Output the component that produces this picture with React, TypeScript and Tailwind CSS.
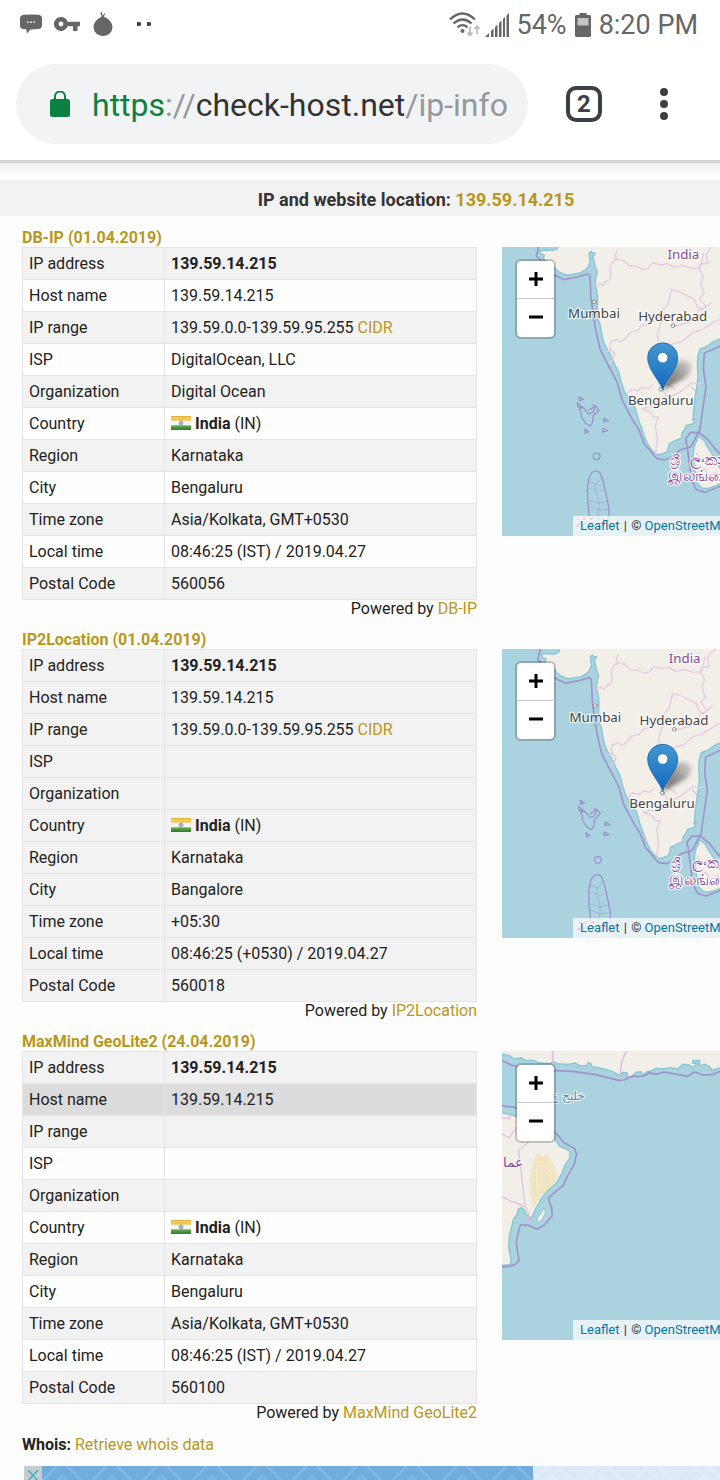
import type { ReactNode } from "react";

type Row = { label: string; value: ReactNode };

function Flag({ id }: { id: string }) {
  return (
    <svg viewBox="0 0 60 42" className="mr-1 mb-0.5 inline-block h-[14px] w-5 align-middle" aria-hidden="true">
      <defs>
        <linearGradient id={`${id}-top`} x1="0" y1="0" x2="0" y2="1">
          <stop offset="0" stopColor="#d3a52c" />
          <stop offset="0.3" stopColor="#f6cd52" />
          <stop offset="1" stopColor="#f0c04c" />
        </linearGradient>
        <linearGradient id={`${id}-low`} x1="0" y1="0" x2="0" y2="1">
          <stop offset="0" stopColor="#6cae4b" />
          <stop offset="1" stopColor="#2c7a34" />
        </linearGradient>
      </defs>
      <rect width="60" height="42" fill="#f7f7f3" />
      <rect width="60" height="14" fill={`url(#${id}-top)`} />
      <rect y="28" width="60" height="14" fill={`url(#${id}-low)`} />
      <circle cx="30" cy="21" r="6" fill="#b9c6dd" stroke="#7f95c0" strokeWidth="2.5" />
      <circle cx="30" cy="21" r="1.6" fill="#5e78ae" />
    </svg>
  );
}

const link = "text-[#b8971b]";
const halo = { paintOrder: "stroke" as const };

function country(id: string) {
  return (
    <>
      <Flag id={id} />
      <b>India</b> (IN)
    </>
  );
}

const range = (
  <>
    139.59.0.0-139.59.95.255 <a href="#cidr" className={link}>CIDR</a>
  </>
);

const ip = <b>139.59.14.215</b>;

const dbIp: Row[] = [
  { label: "IP address", value: ip },
  { label: "Host name", value: "139.59.14.215" },
  { label: "IP range", value: range },
  { label: "ISP", value: "DigitalOcean, LLC" },
  { label: "Organization", value: "Digital Ocean" },
  { label: "Country", value: country("f1") },
  { label: "Region", value: "Karnataka" },
  { label: "City", value: "Bengaluru" },
  { label: "Time zone", value: "Asia/Kolkata, GMT+0530" },
  { label: "Local time", value: "08:46:25 (IST) / 2019.04.27" },
  { label: "Postal Code", value: "560056" },
];

const ip2Location: Row[] = [
  { label: "IP address", value: ip },
  { label: "Host name", value: "139.59.14.215" },
  { label: "IP range", value: range },
  { label: "ISP", value: "" },
  { label: "Organization", value: "" },
  { label: "Country", value: country("f2") },
  { label: "Region", value: "Karnataka" },
  { label: "City", value: "Bangalore" },
  { label: "Time zone", value: "+05:30" },
  { label: "Local time", value: "08:46:25 (+0530) / 2019.04.27" },
  { label: "Postal Code", value: "560018" },
];

const maxMind: Row[] = [
  { label: "IP address", value: ip },
  { label: "Host name", value: "139.59.14.215" },
  { label: "IP range", value: "" },
  { label: "ISP", value: "" },
  { label: "Organization", value: "" },
  { label: "Country", value: country("f3") },
  { label: "Region", value: "Karnataka" },
  { label: "City", value: "Bengaluru" },
  { label: "Time zone", value: "Asia/Kolkata, GMT+0530" },
  { label: "Local time", value: "08:46:25 (IST) / 2019.04.27" },
  { label: "Postal Code", value: "560100" },
];

function IndiaMap({ id, dx, dy, pinY }: { id: string; dx: number; dy: number; pinY: number }) {
  return (
    <svg viewBox="21 21 654 867" preserveAspectRatio="xMinYMin slice" className="block h-full w-full" role="img" aria-label="Map of southern India">
      <defs>
        <linearGradient id={`${id}-pin`} x1="0" y1="0" x2="0" y2="1">
          <stop offset="0" stopColor="#4298d2" />
          <stop offset="1" stopColor="#1468bd" />
        </linearGradient>
        <linearGradient id={`${id}-shade`} x1="0" y1="1" x2="1" y2="0">
          <stop offset="0" stopColor="#000" stopOpacity="0.65" />
          <stop offset="1" stopColor="#000" stopOpacity="0.1" />
        </linearGradient>
        <filter id={`${id}-blur`} x="-30%" y="-30%" width="160%" height="160%">
          <feGaussianBlur stdDeviation="7" />
        </filter>
      </defs>
      <rect x="0" y="0" width="2000" height="1000" fill="#aad3df" />
      <g transform={`translate(${dx} ${dy})`} strokeLinejoin="round" strokeLinecap="round">
        <path
          d="M190 5l-2 20-15 7-20-2-18 2 2 8 12 6-4 9 6 8 18 6 12 18 15 11 19 7 18-2 22-4 15-9 10-10 6-16-3-12 0-14 6-4 4 6 8-1-7 10 3 14 4 18 6 15-4 14-3 23 6 20 2 24-1 25 0 32 8 18 4 22 6 31 9 18 17 32 8 18 12 22 7 28 10 32 17 25 16 26 10 34 8 22 10 30 12 25 10 14 18 14 14-4 14-6 6-24 20-10 16-7 2-15 10-14 2-8 22-6 0-32 3-30 6-40 5-38-2-40 2-24 6-20 14-5 10-5 18-14 16-6 1600-40V0z"
          fill="#f2efe9"
          stroke="#86c6d4"
          strokeWidth="4"
        />
        <path d="M601 588l14 4 11 8 12 22 12 18 12 22 20 34v32l-20 10-22 7-18 0-14-14-7-30-3-30-4-30 6-30 8-12z" fill="#f2efe9" stroke="#86c6d4" strokeWidth="4" />

        <g fill="none" stroke="#e5cbe1" strokeWidth="4">
          <path d="M300 134l14-3 10 6 7-12 13-5 4-16-3-20 8-20 12-4-4-14 4-14M357 56l30 6 16 16 22 2 18 8 16-3 14-16 24 6 20-4 22 12 24-6 28 9 24-2 4-12 20-2-6-26 10-16 18-14" />
          <path d="M340 367l14-8 5-22-14-6-10 4M352 338l-8-18 4-16 18-6 10 8 18-12 10-16 24-6 14-16 22-4 20-16 22-12M491 304l-4-20 10-34 2-36 20-20 4-22 6-22 20 4 26 12 24 14 8 20 14 10 12-10-20-24 14-16-10-30 8-22-14-24 10-20 4-24M608 212l24-10 16-14" />
          <path d="M498 304l28 10 36-10 30-26 26-8 22-12 22-16 20-6M540 258l40-10 26-18" />
          <path d="M395 462l14-14 20 4 12-10 20 4 12-10M503 450l10 16 10 6 12-6 20-10 20-16 14-12 18 4 16-2M503 428l22 8 16 14M445 508l22 8 8 14 16 2-10 26 6 40-4 30-1 22M440 508l22-10 16 6 22-10 14-12" />
          <path d="M604 640l14 20 20-10 10 20 16-12 10 14M604 700l24-14 14 20 24-10" />
        </g>

        <g fill="none" stroke="#9f93cc" strokeWidth="5">
          <path d="M134 10l-10 38 19 18 14 26 18 11 32 16 40-8 32-9 6 6 3 64 7 56 8 46 13 56 29 56 22 42 15 54 32 60 18 28 16 42 38 44 24 4 24-10 20-20 34-10 18-34 8-14 10-70 9-62-8-54 3-46 14-6 34-16 60-8" />
          <path d="M577 622l-5-26 15-19 26 1 25 20 22 28 26 28M577 622l5 40 8 60 14 27 26 8 46-18" />
        </g>
        <path d="M577 622l-8-20M588 440l20 18M590 538l14 0" stroke="#b7a9d8" strokeWidth="3" />

        <g fill="none" stroke="#9c8cca" strokeWidth="3.5">
          <path d="M252 470l13 8-12 4zM247 488l13 11-12 2zM282 511l20-14 10 13-18 18-1 18-7 12-14-8-12-18-3-18-4-10 12-1 6 7 10 12 14-6 5-12-6-10M327 534l14 9-15 3zM324 565l14 8-15 3zM269 567l12 9-10 4z" />
          <path d="M297 640l14-1 5 10-6 9-12 0-4-9z" />
          <path d="M284 840l-6-60-1-38 5-28 8-16 12-6 12 5 8 17 10 42 9 44 3 60" />
          <path d="M282 725l22 8 18-20M280 745l22 6M302 733l0 24 10 30-4 50M308 755l22-6M281 780l28 10 28-6M284 800l24 10 30-2" strokeWidth="2" opacity="0.65" />
        </g>

        <g fill="#fff" stroke="#777" strokeWidth="2.5">
          <circle cx="297" cy="186" r="5.5" />
          <circle cx="534" cy="257" r="5.5" />
          <circle cx="498" cy="448" r="5.5" />
        </g>
        <g fontFamily="'Noto Sans', 'Open Sans', sans-serif" fontSize="40" stroke="#fff" strokeOpacity="0.75" strokeWidth="7" fill="#444" textAnchor="middle" style={halo}>
          <text x="297" y="234" style={halo}>Mumbai</text>
          <text x="533" y="243" style={halo}>Hyderabad</text>
          <text x="497" y="494" style={halo}>Bengaluru</text>
          <text x="565" y="57" fill="#8a4a98" style={halo}>India</text>
          <g textAnchor="start" fill="#8a4a98" strokeOpacity="0.9">
            <text x="524" y="674" fontSize="41" style={halo}>ශ්‍රී</text>
            <text x="586" y="674" fontSize="46" style={halo}>ලංකා</text>
            <text x="518" y="724" fontSize="44" style={halo}>இலங்கை</text>
            <text x="240" y="862" style={halo}>ދިވެހިރާއްޖެ</text>
          </g>
        </g>
      </g>
      <g transform={`translate(0 ${pinY})`}>
        <path d="M503 450L535 372Q560 352 585 368Q598 390 570 415Z" fill={`url(#${id}-shade)`} filter={`url(#${id}-blur)`} />
        <path d="M503 450C497 424 458 390 458 353a45 44 0 0 1 90 0c0 37-39 71-45 97z" fill={`url(#${id}-pin)`} stroke="#2a70ad" strokeWidth="3" />
        <circle cx="503" cy="353" r="16" fill="#fff" stroke="#2a6da6" strokeWidth="2.5" />
      </g>
    </svg>
  );
}

function OmanMap() {
  return (
    <svg viewBox="21 18 654 870" preserveAspectRatio="xMinYMin slice" className="block h-full w-full" role="img" aria-label="Map of the Arabian Sea">
      <defs>
        <pattern id="sand" width="14" height="14" patternUnits="userSpaceOnUse">
          <rect width="14" height="14" fill="#f3e9ca" />
          <path d="M2 3h3M9 9h3M10 3h2M3 10h2M7 6h1" stroke="#e3d09a" strokeWidth="2.5" />
        </pattern>
      </defs>
      <rect x="0" y="0" width="2000" height="1000" fill="#aad3df" />
      <g strokeLinejoin="round" strokeLinecap="round">
        <path d="M10 24l34 8 14 10 20-4 12 8 26 0 18 8 32 2 8-8 12 8 30 2 26-4 12 8 22 0 2-8 10 2 2 8 30 6 14 4 20 6 14 8 10 4 3-10 16 2 0 14 12-2 14-14 14-2 6 10 14-10 12-2 14-8 24 2 16-4 26 4 14-14 20 2 10 8 14-12-14-2 0-8 22 0-2 8 0 8 16-4 14 6 8 12 18-6 26-2 1600 20V0H10z" fill="#f2efe9" stroke="#86c6d4" strokeWidth="4" />
        <path d="M10 203l22 2 20 6 25 6 40 30 60 32 18 26 16 6 14 8 0 20-14 20-12 30-16 26-20 16-22 26-8 16-10 16-12 26-6 4-10-10-8-14-8-8-10 6-2 14-12 16-6 26-6 22-2 34 4 24 4 16-4 14-28 2H10z" fill="#f2efe9" stroke="#86c6d4" strokeWidth="4" />
        <path d="M147 489l5 14-6 10-6 14-12 5-2-12 12-16z" fill="#f2efe9" stroke="#86c6d4" strokeWidth="3" />
        <path d="M128 323l12 10 14-4 18 22 14 30-4 30-20 20-26 20-12 28-14 4-4-40-2-36 4-36 10-28z" fill="url(#sand)" />
        <g fill="none" stroke="#dfbfe0" strokeWidth="3.5">
          <path d="M172 10l2 45M396 15l-16 34-7 56" strokeWidth="5" />
          <path d="M44 212v8H10M10 260l32 18 30-38M100 292l-30 24 6 40 6 60 8 64M10 450l38 18 42 16 12 24-4 30" />
        </g>
        <g fill="none" stroke="#9f93cc" strokeWidth="5">
          <path d="M10 42l40 18 60 20 68-4 60 4 60 8 52 13 20 5 18-1 20-11 36 0 20-11 18 5 26-7 70 13 20-13 28 9 26-1 26-11 60-4" />
          <path d="M10 178l20 6 26 2 60 30 68 50 24 28 30 16 7 18-9 34-18 30-14 30-30 24-14 14 10 30 2 22-24 28-22 13-28-13-22 0-8 30-4 26 8 50-8 10-20 8-32 2" />
        </g>
        <g fontFamily="'DejaVu Sans', 'Noto Sans', sans-serif" stroke="#fff" strokeOpacity="0.8" strokeWidth="6">
          <text x="168" y="166" fontSize="36" fill="#5b88bb" direction="ltr" style={halo}>خليج ع</text>
          <text x="24" y="367" fontSize="41" fill="#8a4a98" direction="ltr" style={halo}>عما</text>
        </g>
      </g>
    </svg>
  );
}

type ProviderProps = {
  name: string;
  date: string;
  rows: Row[];
  map: ReactNode;
  tone: "striped" | "plain";
  active?: number;
};

function Provider({ name, date, rows, map, tone, active }: ProviderProps) {
  return (
    <section className="mb-[11px] flex pl-[22px]">
      <div className="w-[455px] shrink-0">
        <h2 className={`h-5 text-base leading-[22px] font-bold ${link}`}>
          {name} ({date})
        </h2>
        <table className="w-full table-fixed border-collapse border border-[#e5e5e5]">
          <tbody>
            {rows.map((row, i) => (
              <tr
                key={row.label}
                className={`h-8 ${i === active ? "bg-[#dcdcdc]" : tone === "striped" && i % 2 === 1 ? "bg-[#fefefe]" : "bg-[#f2f2f2]"}`}
              >
                <th scope="row" className="w-[142px] border border-[#e5e5e5] px-1.5 py-0 text-left leading-5 font-normal">
                  {row.label}
                </th>
                <td className="border border-[#e5e5e5] px-1.5 py-0 leading-5">{row.value}</td>
              </tr>
            ))}
          </tbody>
        </table>
        <p className="text-right leading-[18px]">
          Powered by <a href="#provider" className={link}>{name}</a>
        </p>
      </div>
      <div className="relative mt-5 ml-[25px] h-[289px] min-w-0 flex-1 overflow-hidden">
        {map}
        <div className="absolute top-3 left-[13px] flex w-[41px] flex-col rounded-md border-2 border-black/20 bg-white bg-clip-padding">
          <button type="button" aria-label="Zoom in" className="flex h-[38px] items-center justify-center border-b border-[#cccccc] pb-0.5">
            <svg viewBox="0 0 14 14" className="h-3.5 w-3.5"><path d="M7 0v14M0 7h14" stroke="#000" strokeWidth="3" /></svg>
          </button>
          <button type="button" aria-label="Zoom out" className="flex h-[38px] items-center justify-center pb-0.5">
            <svg viewBox="0 0 14 14" className="h-3.5 w-3.5"><path d="M0 7h14" stroke="#000" strokeWidth="3" /></svg>
          </button>
        </div>
        <div className="absolute right-0 bottom-0 left-[71px] h-5 overflow-hidden bg-white/70 pl-[7px] text-[13px] leading-[19px] whitespace-nowrap text-[#333333]">
          <a href="#leaflet" className="text-[#0078a8]">Leaflet</a> <span className="mx-px">|</span> © <a href="#osm" className="text-[#0078a8]">OpenStreetMap</a>
        </div>
      </div>
    </section>
  );
}

function StatusBar() {
  return (
    <div className="flex h-12 items-center justify-between pr-[22px] pl-5 text-[#666666]">
      <div className="flex items-center">
        <svg viewBox="0 0 22 20" className="h-5 w-[22px]" aria-hidden="true">
          <path d="M3.500.8Q11 0 18.500.8 22 1.200 22 4.500v7q0 3-3.500 3.500l-8 .4-3.700 4.100-.3-4-3-.4Q0 14.700 0 11.500v-7Q0 1.200 3.500.8z" fill="currentColor" />
          <path d="M7 8.200h1.600M10.200 8.200h1.600M13.400 8.200h1.600" stroke="#fff" strokeWidth="1.400" />
        </svg>
        <svg viewBox="0 0 26 14" className="ml-3 h-3.5 w-[26px]" aria-hidden="true">
          <path fillRule="evenodd" d="M7 0a7 7 0 1 0 6.600 9.200H19V14h4.500V9.200H26V4.800H13.600A7 7 0 0 0 7 0zM7 4.600a2.400 2.400 0 1 1 0 4.800 2.400 2.400 0 0 1 0-4.800z" fill="currentColor" />
        </svg>
        <svg viewBox="0 0 20 26" className="ml-[13px] h-[26px] w-5" aria-hidden="true">
          <path d="M10 5c2 1.600 9.500 4 9.500 11.200A9 9 0 0 1 10 25 9 9 0 0 1 .5 16.200C.5 9 8 6.600 9 5z" fill="currentColor" />
          <path d="M9.500 6.500L8 1M9.500 6.500l2.300-4M9.200 4L7.800 3" stroke="currentColor" strokeWidth="1.200" fill="none" />
        </svg>
        <svg viewBox="0 0 16 4" className="ml-6 h-1 w-4 text-[#444444]" aria-hidden="true">
          <path d="M0 0h3l1 1v2L3 4H0zM10 0h3l1 1v2l-1 1h-3z" fill="currentColor" />
        </svg>
      </div>
      <div className="flex items-center pt-0.5 text-[27px] leading-8">
        <svg viewBox="0 0 32 26" className="h-[26px] w-8" aria-hidden="true">
          <g fill="none" stroke="currentColor" strokeWidth="2.200">
            <path d="M1 7.500Q13.500-4.500 26 7.500M4.500 11.500q9-8 18 0M8.500 15.300q5-4.200 10 0" />
          </g>
          <circle cx="13.500" cy="19" r="2" fill="currentColor" />
          <path d="M21 15v8M18.500 20.500L21 23.500l2.500-3M28 22v-8M25.300 17L28 14l2.700 3" fill="none" stroke="#bdbdbd" strokeWidth="1.800" />
        </svg>
        <svg viewBox="0 0 24 24" className="ml-1 h-6 w-6" aria-hidden="true">
          <path d="M0 24l4-4v4zM6 24v-6l2.500-2.500V24zM10 24V14l2.500-2.500V24zM14 24V10l2.500-2.500V24zM18 24V6l2-2v20zM21.500 24V2.500L24 0v24z" fill="currentColor" />
        </svg>
        <span className="ml-2">54%</span>
        <svg viewBox="0 0 16 24" className="ml-2 h-6 w-4" aria-hidden="true">
          <path d="M4.500 0h7v2H15l1 1v20l-1 1H1l-1-1V3l1-1h3.500z" fill="currentColor" />
          <path d="M2.500 5h11v7.500h-11z" fill="#c4c4c4" />
        </svg>
        <span className="ml-2">8:20 PM</span>
      </div>
    </div>
  );
}

function Toolbar() {
  return (
    <div className="flex h-28 items-center gap-4 px-4">
      <button type="button" className="flex h-20 min-w-0 flex-1 items-center rounded-full bg-[#f1f3f4] pr-5 pl-[34px] text-left">
        <svg viewBox="0 0 20 26" className="h-[26px] w-5 shrink-0 text-[#0b8043]" aria-hidden="true">
          <path d="M5 10V5.500a5 5 0 0 1 10 0V10" fill="none" stroke="currentColor" strokeWidth="2" />
          <rect y="8" width="20" height="18" rx="2.500" fill="currentColor" />
        </svg>
        <span className="ml-[22px] min-w-0 flex-1 overflow-hidden pt-0.5 text-[32px] leading-10 whitespace-nowrap text-[#333333]">
          <span className="text-[#0b8043]">https</span>
          <span className="text-[#969899]">://</span>check-host.net<span className="text-[#969899]">/ip-info</span>
        </span>
      </button>
      <div className="flex">
        <button type="button" aria-label="Open tabs" className="flex h-20 w-20 items-center justify-center">
          <span className="flex h-9 w-9 items-center justify-center rounded-[10px] border-4 border-[#3c4043] text-2xl leading-6 font-bold text-[#3c4043]">2</span>
        </button>
        <button type="button" aria-label="Menu" className="flex h-20 w-20 items-center justify-center text-[#3c4043]">
          <svg viewBox="0 0 8 32" className="h-8 w-2"><circle cx="4" cy="4" r="4" fill="currentColor" /><circle cx="4" cy="16" r="4" fill="currentColor" /><circle cx="4" cy="28" r="4" fill="currentColor" /></svg>
        </button>
      </div>
    </div>
  );
}

function Chevrons({ id, color }: { id: string; color: string }) {
  return (
    <svg className="block h-full w-full" aria-hidden="true">
      <defs>
        <pattern id={id} width="50" height="50" patternUnits="userSpaceOnUse">
          <path d="M-5 35L20 10l25 25M-5 20L20-5l25 25M-5 50l25-25 25 25M45 35l10-10M45 20l10-10" fill="none" stroke={color} strokeWidth="2" />
        </pattern>
      </defs>
      <rect width="100%" height="100%" fill={`url(#${id})`} />
    </svg>
  );
}

export default function App() {
  return (
    <div className="overflow-x-hidden bg-[#fdfdfd] font-[Roboto,sans-serif] text-base text-[#222222]">
      <header className="bg-white">
        <StatusBar />
        <Toolbar />
      </header>
      <div className="h-5 border-t-3 border-[#d1d3d3] bg-linear-to-b from-[#eeeeee] to-[#fdfdfd] to-70%" />
      <main>
        <h1 className="mb-[11px] h-9 bg-[#f2f2f2] pt-0.5 pl-28 text-center text-lg leading-9 font-bold text-[#333333]">
          IP and website location: <a href="#ip" className={link}>139.59.14.215</a>
        </h1>
        <Provider name="DB-IP" date="01.04.2019" rows={dbIp} tone="striped" map={<IndiaMap id="m1" dx={0} dy={0} pinY={0} />} />
        <Provider name="IP2Location" date="01.04.2019" rows={ip2Location} tone="plain" map={<IndiaMap id="m2" dx={4} dy={5} pinY={-2} />} />
        <Provider name="MaxMind GeoLite2" date="24.04.2019" rows={maxMind} tone="striped" active={1} map={<OmanMap />} />
        <p className="mb-[11px] pt-0.5 pl-[22px] leading-5">
          <b>Whois:</b> <a href="#whois" className={link}>Retrieve whois data</a>
        </p>
        <aside className="flex h-3.5 overflow-hidden pl-6">
          <button type="button" aria-label="Close ad" className="flex w-[18px] items-start justify-center bg-[#c8cccd] pt-1">
            <svg viewBox="0 0 12 12" className="h-3 w-3 shrink-0"><path d="M1 0l10 11M11 0L1 11" stroke="#3fb0c6" strokeWidth="1.500" /></svg>
          </button>
          <div className="w-[491px] bg-[#70acdc]"><Chevrons id="ad-dark" color="#86b9e2" /></div>
          <div className="flex-1 bg-[#dceaf6]"><Chevrons id="ad-light" color="#e2edf7" /></div>
        </aside>
      </main>
    </div>
  );
}
